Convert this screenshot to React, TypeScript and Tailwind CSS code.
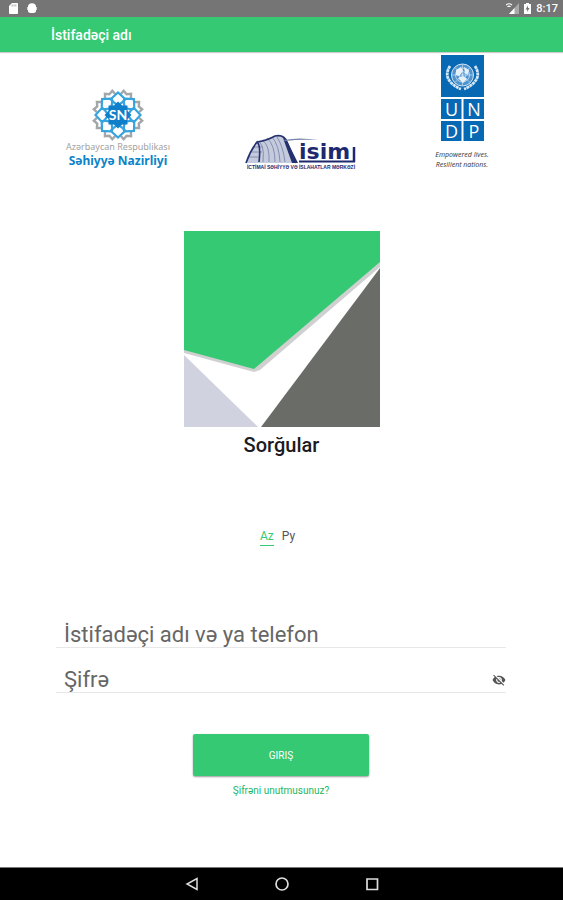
import React from "react";

const POINTS = [0, 45, 90, 135, 180, 225, 270, 315];

const StatusBar = () => (
  <div className="flex h-[17px] items-center justify-between bg-[#757575] pl-[9px] pr-[5px] text-white">
    <div className="flex items-center gap-[9px]">
      <svg className="h-[11px] w-[9px]" viewBox="0 0 9 11" fill="#fff" aria-hidden="true">
        <path d="M3 0h5.200q.8 0 .8.8v9.400q0 .8-.8.8H.8Q0 11 0 10.200V3z" />
        <path d="M3.200 1.500v2M5 1.500v2M6.800 1.500v2" stroke="#757575" strokeWidth=".6" />
      </svg>
      <svg className="h-[11px] w-[10px]" viewBox="0 0 10 11" fill="#fff" aria-hidden="true">
        <path d="M1 4a4 3.700 0 0 1 8 0v4q0 1.500-1.500 1.500h-5Q1 9.500 1 8z" />
        <path d="M.3 4h9.400v3H.3zM2.500 9h5v1h-5z" />
      </svg>
    </div>
    <div className="flex items-center gap-[5px]">
      <svg className="h-[11px] w-[13px]" viewBox="0 0 13 11" aria-hidden="true">
        <path d="M13 0v11H3z" fill="#a9a9a9" />
        <path d="M8.500 5v6H3z" fill="#fff" />
        <path d="M0 2q3-2.500 6 0M1.500 3.800q1.500-1.200 3 0" stroke="#fff" strokeWidth="1.200" fill="none" />
      </svg>
      <svg className="h-[11px] w-[7px]" viewBox="0 0 7 11" aria-hidden="true">
        <path d="M2 0h3v1h2v10H0V1h2z" fill="#fff" />
        <path d="M4 2.500 1.500 6.500H3.200v2.500l2.300-4H4z" fill="#757575" />
      </svg>
      <span className="text-[11px] font-medium leading-none">8:17</span>
    </div>
  </div>
);

const MinistryLogo = () => (
  <div className="flex w-[102px] flex-col items-center pb-px">
    <svg className="h-[52px] w-[52px]" viewBox="-26 -26 52 52" fill="none" role="img" aria-label="Səhiyyə Nazirliyi">
      {POINTS.map((angle) => (
        <path
          key={angle}
          transform={`rotate(${angle + 22.5})`}
          d="M-5.500-20.500-4-24.500 0-22.500 4-24.500l1.500 4"
          stroke="#a3a7aa"
          strokeWidth="2.400"
        />
      ))}
      {POINTS.map((angle) => (
        <path key={angle} transform={`rotate(${angle})`} d="M-6-14v-3L0-22.500l6 5.500v3L0-9.500z" stroke="#36a4df" strokeWidth="2.200" />
      ))}
      <path d="M-9.500-9.500h19v19h-19z" fill="#0f7fca" />
      <path d="M0-13.500 13.500 0 0 13.500-13.500 0z" fill="#0f7fca" />
      <text x="0" y="5" textAnchor="middle" fill="#fff" fontSize="14" fontWeight="700" fontFamily="Lato, sans-serif">
        SN
      </text>
    </svg>
    <span className="whitespace-nowrap font-['Noto_Sans',sans-serif] text-[9px] leading-[12px] text-[#a2a2a2]">Azərbaycan Respublikası</span>
    <span className="whitespace-nowrap font-['Noto_Sans',sans-serif] text-[12px] font-bold leading-[16px] text-[#0b83ca]">Səhiyyə Nazirliyi</span>
  </div>
);

const IsimLogo = () => (
  <svg className="h-[36px] w-[112px]" viewBox="0 0 112 36" fill="none" role="img" aria-label="İSİM">
    <path d="M1 29Q5 17 12 7l20-5q9 0 11 7 2 11 7 20z" fill="#c5cbdc" />
    <path d="M12 7q8 2 6 21M17 6q8 5 7 22M22 4q8 7 8 24M27 3q7 8 8 25M32 3q6 9 8 25M4 23h11M6 18h11M9 13h9" stroke="#8490b3" strokeWidth="1" />
    <path d="M1 29Q5 17 12 8q9-1 18-6 9-2 12 6l9 21M12 8q4 3 2 20" stroke="#25306f" strokeWidth="1.600" />
    <path d="M42 7 53 29h-6L38 4z" fill="#25306f" />
    <path d="M39 6q15-3 34 0-17-1-33 1z" fill="#7985aa" />
    <path d="M54 27.500h56" stroke="#1e286f" strokeWidth="2" />
    <text x="54" y="25" fill="#1e286f" fontSize="22" fontWeight="700" fontFamily="DejaVu Sans, sans-serif">
      isim
    </text>
    <path d="M109 13v15" stroke="#1e286f" strokeWidth="2.500" />
    <text x="56" y="35" textAnchor="middle" fill="#1e286f" fontSize="5" fontWeight="700" fontFamily="Liberation Sans, sans-serif">
      İCTİMAİ SƏHİYYƏ VƏ İSLAHATLAR MƏRKƏZİ
    </text>
  </svg>
);

const UndpLogo = () => (
  <div className="flex w-[60px] flex-col items-center">
    <svg className="h-[86px] w-[43px]" viewBox="0 0 43 86" role="img" aria-label="UNDP">
      <path d="M0 0h43v42H0zM0 44h20.500v20H0zM22.500 44H43v20H22.500zM0 66h20.500v20H0zM22.500 66H43v20H22.500z" fill="#0768b3" />
      <g fill="none" stroke="#d5e6f5">
        <circle cx="21.500" cy="20" r="11" fill="#4f94cf" strokeWidth="1" />
        <circle cx="21.500" cy="20" r="7" strokeWidth=".7" />
        <circle cx="21.500" cy="20" r="3.500" strokeWidth=".7" />
        <path d="M11 20h21M21.500 9.500v21M14 12.500l15 15M29 12.500l-15 15" strokeWidth=".6" />
        <path d="M9 11q-5 8-1 14t12 9M34 11q5 8 1 14t-12 9" strokeWidth="2.800" strokeDasharray="3 .5" />
      </g>
      <path d="m15 15 5-3 2 4-4 5-3-1zM23 12l5 3-1 5-3-2zM17 23l5-2 4 3-4 4z" fill="#e6f0f9" />
      <g fill="#fff" fontSize="18" textAnchor="middle" fontFamily="Open Sans, sans-serif">
        <text x="10.500" y="60.500">U</text>
        <text x="33" y="60.500">N</text>
        <text x="10.500" y="82.500">D</text>
        <text x="33" y="82.500">P</text>
      </g>
    </svg>
    <p className="mt-[9px] whitespace-nowrap text-center font-['Open_Sans',sans-serif] text-[7px] italic leading-[10px] text-[#333]">
      Empowered lives.
      <br />
      Resilient nations.
    </p>
  </div>
);

const AppLogo = () => (
  <svg className="mt-[61px] h-[196px] w-[196px]" viewBox="0 0 196 196" aria-hidden="true">
    <path d="M0 0h196v196H0z" fill="#fff" />
    <path d="M0 119v3l70 19 6-2L196 36v-6z" fill="#d0d0d0" />
    <path d="M0 0h196v31L70 138 0 119z" fill="#35c974" />
    <path d="M0 124l74 72H0z" fill="#d0d2e0" />
    <path d="M196 37v159H77z" fill="#6a6d67" />
  </svg>
);

const EyeOff = () => (
  <svg className="h-[14px] w-[14px]" viewBox="0 0 24 24" fill="#555" aria-hidden="true">
    <path d="M12 7a5 5 0 0 1 4.640 6.830l2.920 2.920A11.800 11.800 0 0 0 23 12C21.270 7.610 17 4.500 12 4.500c-1.400 0-2.740.250-3.980.700l2.160 2.160C10.740 7.130 11.350 7 12 7zM2 4.270l2.740 2.740A11.800 11.800 0 0 0 1 12c1.730 4.390 6 7.500 11 7.500 1.550 0 3.030-.300 4.380-.840L19.730 22 21 20.730 3.270 3zM7.530 9.800l1.550 1.550A3 3 0 0 0 12.650 14.920l1.550 1.550A5 5 0 0 1 7.530 9.800zm4.310-.780 3.150 3.150.020-.160a3 3 0 0 0-3-3z" />
  </svg>
);

const inputClass =
  "h-[28px] w-full min-w-0 bg-transparent pl-2 pt-0.5 text-[22px] text-[#333] placeholder:text-[#666] outline-none";

const LoginForm = () => (
  <form className="mt-[73px] flex w-full flex-col items-center pl-[56px] pr-[57px]" onSubmit={(e) => e.preventDefault()}>
    <div className="flex w-full border-b border-[#e8e8e8]">
      <input className={inputClass} type="text" aria-label="İstifadəçi adı və ya telefon" placeholder="İstifadəçi adı və ya telefon" />
    </div>
    <div className="mt-4 flex w-full items-center border-b border-[#e8e8e8]">
      <input className={inputClass} type="password" aria-label="Şifrə" placeholder="Şifrə" />
      <button type="button" className="pt-1" aria-label="Şifrəni göstər">
        <EyeOff />
      </button>
    </div>
    <button type="submit" className="mt-[41px] h-[42px] w-[176px] rounded-xs bg-[#35c974] text-[10px] text-white shadow-[0_1px_2px_#0006]">
      GIRIŞ
    </button>
    <a href="#" className="mt-2 text-[10px] leading-[14px] text-[#20b763]">
      Şifrəni unutmusunuz?
    </a>
  </form>
);

const NavBar = () => (
  <nav className="flex h-[33px] items-center justify-center gap-[74px] border-t border-[#777] bg-black">
    <button type="button" aria-label="Back">
      <svg className="h-4 w-4" viewBox="0 0 16 16" fill="none" stroke="#ddd" strokeWidth="1.500">
        <path d="M13 2.500v11L3 8z" />
      </svg>
    </button>
    <button type="button" aria-label="Home">
      <svg className="h-4 w-4" viewBox="0 0 16 16" fill="none" stroke="#ddd" strokeWidth="1.700">
        <circle cx="8" cy="8" r="6" />
      </svg>
    </button>
    <button type="button" aria-label="Recent">
      <svg className="h-4 w-4" viewBox="0 0 16 16" fill="none" stroke="#ddd" strokeWidth="1.700">
        <path d="M3 3h10.500v10.500H3z" />
      </svg>
    </button>
  </nav>
);

export default function App() {
  return (
    <div className="flex min-h-screen flex-col bg-white font-[Roboto,sans-serif]">
      <StatusBar />
      <header className="flex h-[35px] items-center bg-[#35c974] pl-[51px] pt-0.5 shadow-[0_1px_1px_#0003]">
        <span className="text-[14px] font-medium text-white">İstifadəçi adı</span>
      </header>
      <main className="flex flex-1 flex-col items-center pt-[3px]">
        <div className="flex w-full items-end justify-between pl-[67px] pr-[71px]">
          <MinistryLogo />
          <IsimLogo />
          <UndpLogo />
        </div>
        <AppLogo />
        <h1 className="mt-1 text-[20px] font-medium leading-[28px] text-[#1c1a22]">Sorğular</h1>
        <div className="mt-[68px] flex gap-2 pr-2 text-[12px] leading-[18px]">
          <button type="button" className="border-b border-[#35c974] text-[#35c974]">Az</button>
          <button type="button" className="border-b border-transparent text-[#555]">Ру</button>
        </div>
        <LoginForm />
      </main>
      <NavBar />
    </div>
  );
}
